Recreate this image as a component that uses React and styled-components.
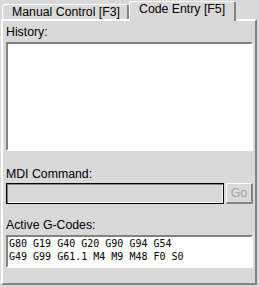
import React from "react";
import styled, { createGlobalStyle } from "styled-components";

const Global = createGlobalStyle`
  html, body { margin: 0; padding: 0; background: #d9d9d9; }
  body { font-family: "Liberation Sans", Arial, sans-serif; font-size: 12.3px; color: #000; }
  * { box-sizing: border-box; }
`;

const Window = styled.div`
  width: 259px;
  height: 287px;
  padding-left: 1px;
  background: #d9d9d9;
`;

const Notebook = styled.div`
  width: 256px;
  display: flex;
  flex-direction: column;
`;

const TabBar = styled.div`
  display: flex;
  align-items: flex-end;
  height: 19px;
  padding-left: 1px;
`;

const Tab = styled.div`
  position: relative;
  z-index: ${(p) => (p.$active ? 2 : 1)};
  width: ${(p) => p.$w}px;
  height: ${(p) => (p.$active ? 20 : 15)}px;
  margin-bottom: ${(p) => (p.$active ? -2 : 0)}px;
  padding: 1px 0 0 9px;
  background: #d9d9d9;
  border-top: 1px solid #fff;
  border-left: 1px solid #fff;
  border-right: 2px solid #828282;
  border-radius: 3px 3px 0 0;
  font-size: 12.3px;
  line-height: 13px;
  white-space: nowrap;
`;

const Panel = styled.div`
  height: 266px;
  border: 2px solid;
  border-color: #fff #828282 #828282 #fff;
  padding: 0 2px 0 3px;
  display: flex;
  flex-direction: column;
`;

const Label = styled.div`
  margin-top: ${(p) => p.$mt}px;
  font-size: 12.3px;
  line-height: 15px;
  height: 15px;
`;

const TextBox = styled.div`
  margin-top: 2px;
  height: ${(p) => p.$h}px;
  background: #fff;
  border: 2px solid;
  border-color: #828282 #fff #fff #828282;
  padding: 0 1px;
  font-family: "DejaVu Sans Mono", "Liberation Mono", monospace;
  font-size: 10px;
  line-height: 13px;
  white-space: pre;
`;

const EntryRow = styled.div`
  margin-top: 1px;
  display: flex;
  gap: 2px;
  height: 21px;
`;

const Entry = styled.div`
  width: 218px;
  height: 21px;
  border: 1px solid #000;
  background: #d9d9d9;
  box-shadow: inset 1px 1px 0 #828282, inset -1px -1px 0 #fff;
`;

const Button = styled.div`
  width: 27px;
  height: 21px;
  border-top: 1px solid #fff;
  border-left: 1px solid #fff;
  border-right: 2px solid #828282;
  border-bottom: 2px solid #828282;
  color: #a3a3a3;
  font-size: 12.3px;
  line-height: 18px;
  text-align: center;
`;

export default function App() {
  return (
    <>
      <Global />
      <Window>
        <Notebook>
          <TabBar>
            <Tab $w={127}>Manual Control [F3]</Tab>
            <Tab $w={107} $active>Code Entry [F5]</Tab>
          </TabBar>
          <Panel>
            <Label $mt={4}>History:</Label>
            <TextBox $h={109} />
            <Label $mt={16}>MDI Command:</Label>
            <EntryRow>
              <Entry />
              <Button>Go</Button>
            </EntryRow>
            <Label $mt={14}>Active G-Codes:</Label>
            <TextBox $h={33}>
              {"G80 G19 G40 G20 G90 G94 G54\nG49 G99 G61.1 M4 M9 M48 F0 S0"}
            </TextBox>
          </Panel>
        </Notebook>
      </Window>
    </>
  );
}
